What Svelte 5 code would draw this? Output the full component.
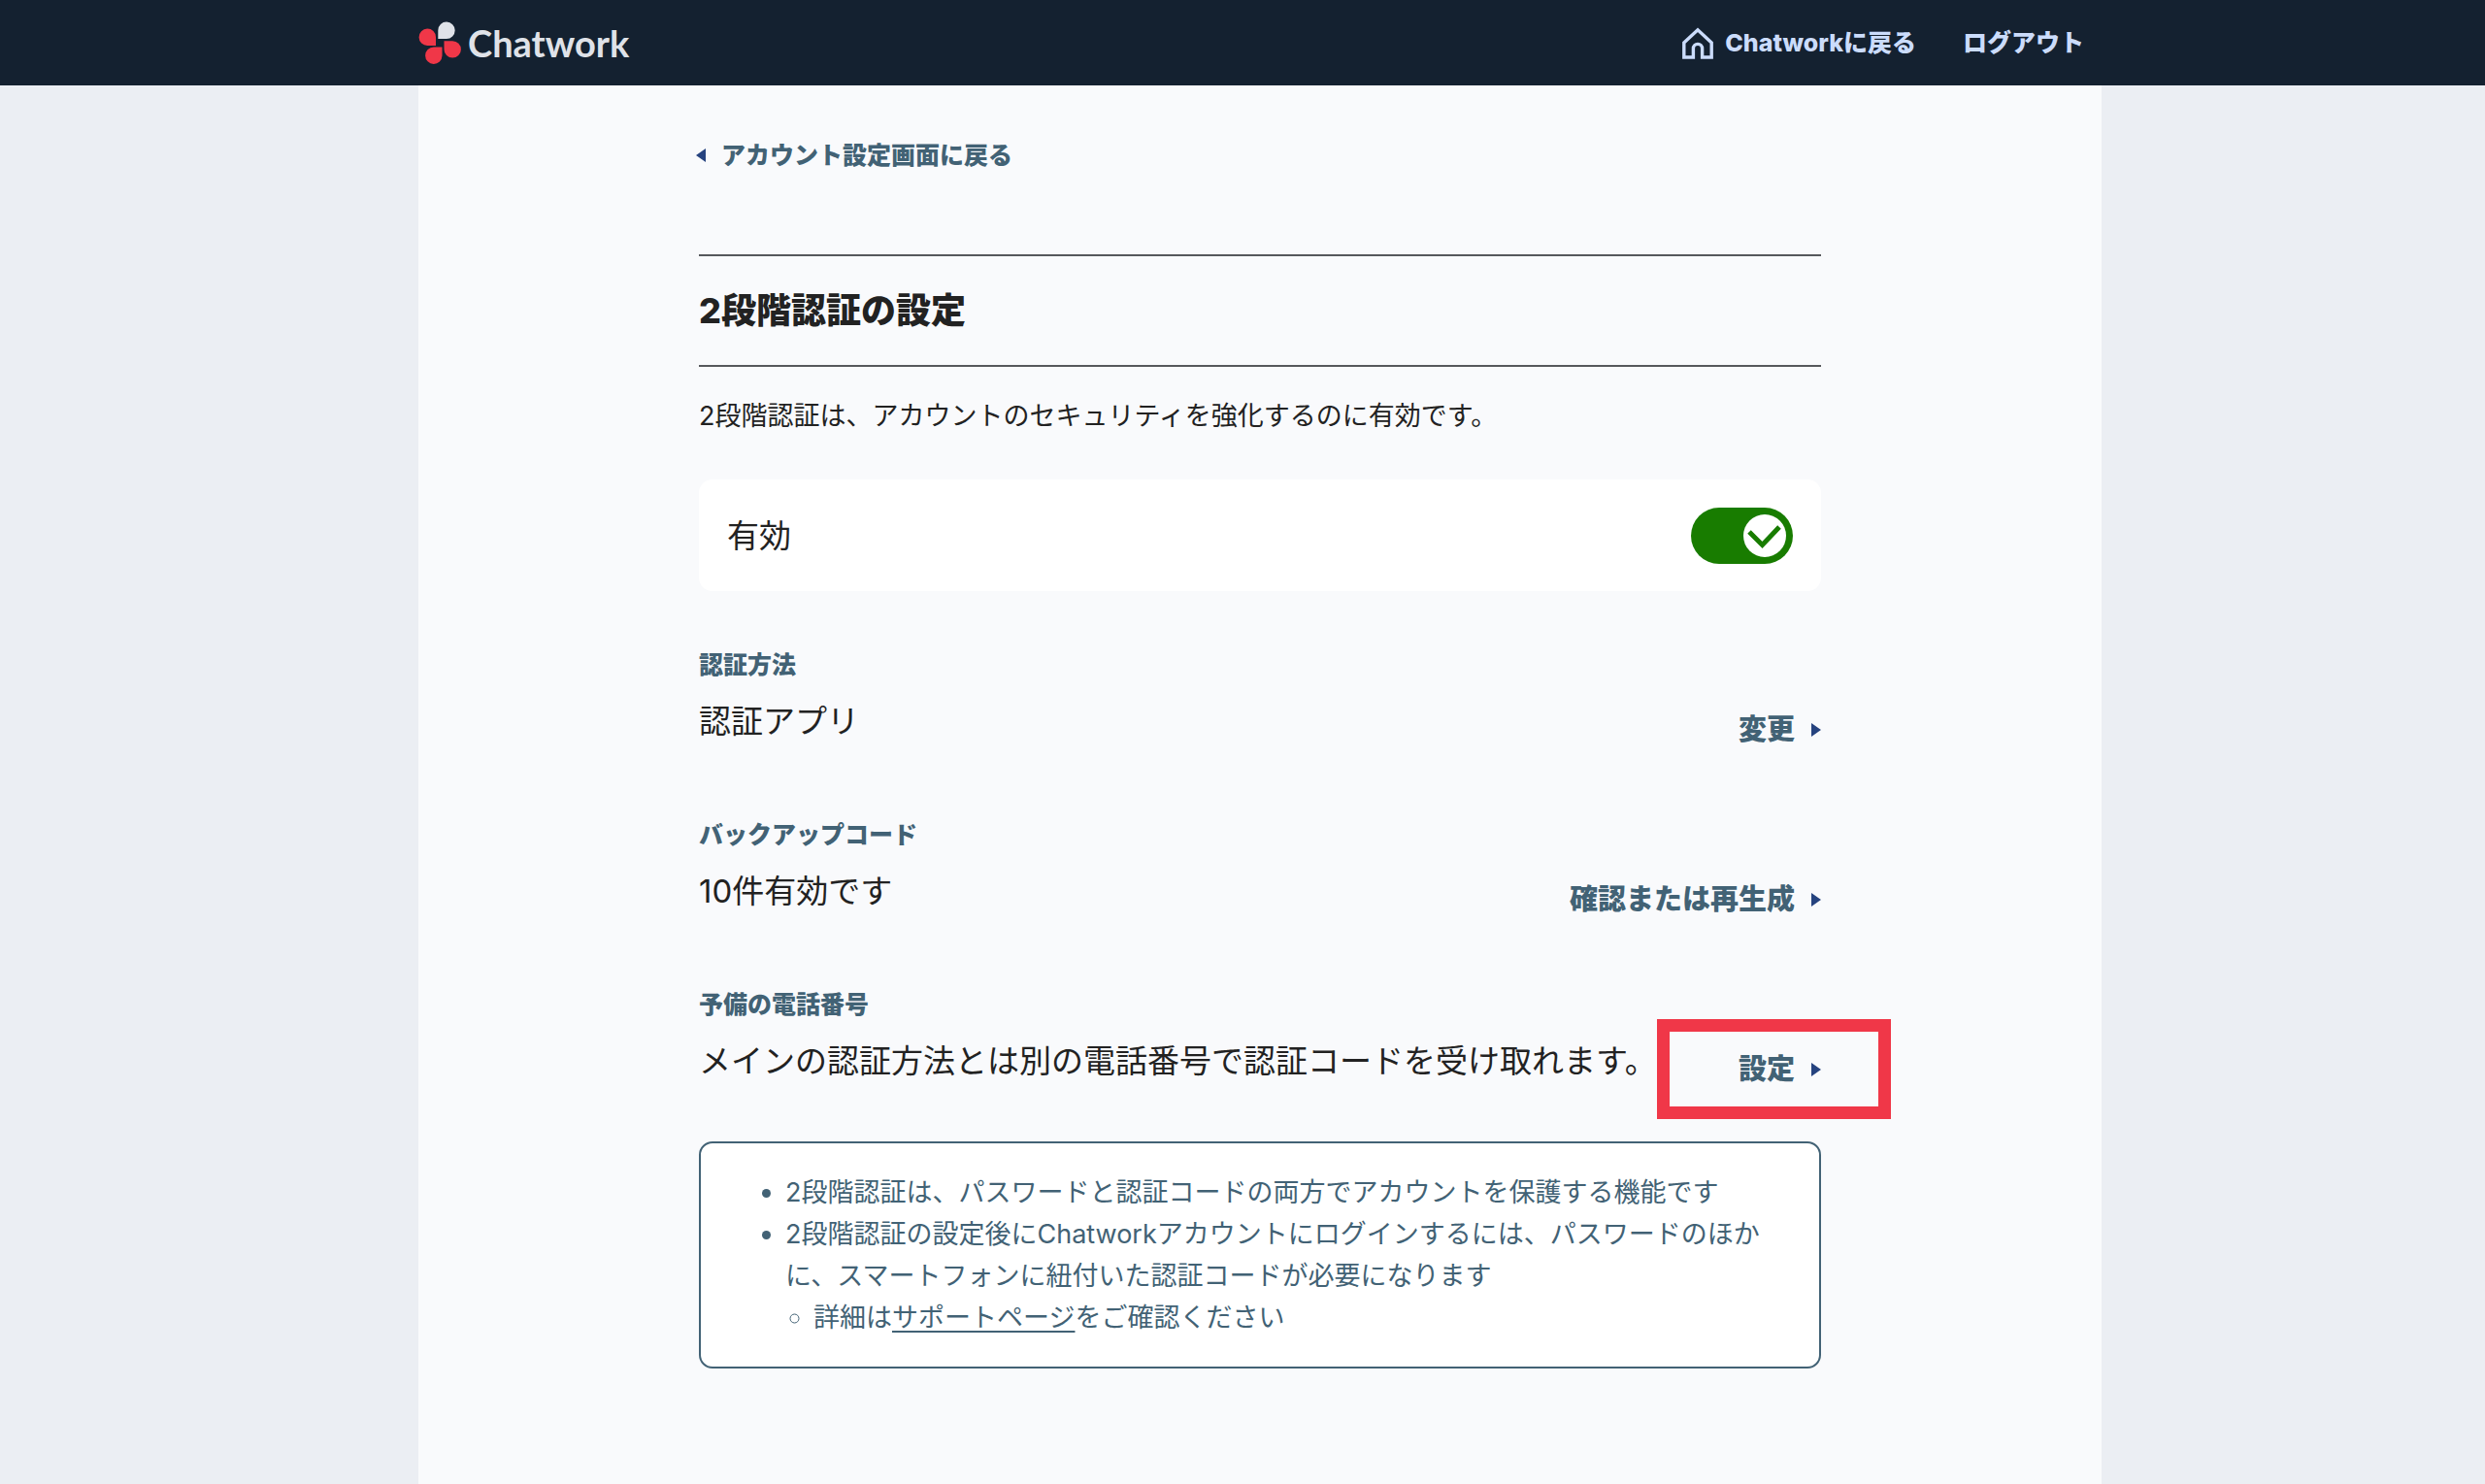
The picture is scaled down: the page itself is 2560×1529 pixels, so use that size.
<script>
  let enabled = true;

  const settings = [
    { label: '認証方法', value: '認証アプリ', action: '変更', highlight: false },
    { label: 'バックアップコード', value: '10件有効です', action: '確認または再生成', highlight: false },
    {
      label: '予備の電話番号',
      value: 'メインの認証方法とは別の電話番号で認証コードを受け取れます。',
      action: '設定',
      highlight: true,
    },
  ];
</script>

<div class="page">
  <header class="header">
    <div class="header-inner">
      <a class="logo" href="#top">
        <svg class="logo-mark" viewBox="0 0 44 44" aria-hidden="true">
          <path fill="#dfe2e8" d="M20.3 18V9.2a8.7 8.7 0 1 1 8.7 8.8z" />
          <path fill="#f03748" d="M18 25H9.4A8.7 8.7 0 1 1 18 16.2z" />
          <path fill="#f03748" d="M24.5 26.5v8.8a8.7 8.7 0 1 1-8.7-8.8z" />
          <path fill="#f03748" d="M26.5 20.2h8.7a8.7 8.7 0 1 1-8.7 8.7z" />
        </svg>
        <span>Chatwork</span>
      </a>
      <nav class="nav">
        <a href="#home">
          <svg class="home" viewBox="0 0 32 33" aria-hidden="true">
            <path d="M1.8 31V16L16 2.8 30.2 16v15H20.6v-9a4.6 4.6 0 0 0-9.2 0v9z" />
          </svg>
          <span>Chatworkに戻る</span>
        </a>
        <a href="#logout">ログアウト</a>
      </nav>
    </div>
  </header>

  <main class="main">
    <div class="content">
      <a class="back" href="#account">
        <svg class="arrow" viewBox="0 0 10 14" aria-hidden="true"><path d="M10 0v14L0 7z" /></svg>
        <span>アカウント設定画面に戻る</span>
      </a>

      <h1>2段階認証の設定</h1>
      <p class="lead">2段階認証は、アカウントのセキュリティを強化するのに有効です。</p>

      <label class="card">
        <span>有効</span>
        <span class="toggle">
          <input type="checkbox" role="switch" bind:checked={enabled} />
          <span class="knob">
            <svg viewBox="0 0 44 44" aria-hidden="true"><path d="M6 18l13.500 13.500L37 13" /></svg>
          </span>
        </span>
      </label>

      <div class="settings">
        {#each settings as item}
          <section class="item">
            <div>
              <h2>{item.label}</h2>
              <p>{item.value}</p>
            </div>
            <a class="action" class:highlight={item.highlight} href="#edit">
              <span>{item.action}</span>
              <svg class="arrow" viewBox="0 0 10 14" aria-hidden="true"><path d="M0 0v14l10-7z" /></svg>
            </a>
          </section>
        {/each}
      </div>

      <div class="notes">
        <ul>
          <li>2段階認証は、パスワードと認証コードの両方でアカウントを保護する機能です</li>
          <li>
            2段階認証の設定後にChatworkアカウントにログインするには、パスワードのほかに、スマートフォンに紐付いた認証コードが必要になります
            <ul>
              <li>詳細は<a href="#support">サポートページ</a>をご確認ください</li>
            </ul>
          </li>
        </ul>
      </div>
    </div>
  </main>
</div>

<style>
  :global(body) {
    background-color: #ebeef3;
  }

  * {
    box-sizing: border-box;
    margin: 0;
    padding: 0;
  }

  .page {
    display: flex;
    flex-direction: column;
    min-height: 100vh;
    font-family: Inter, 'Noto Sans CJK JP', sans-serif;
    color: #222;
  }

  a {
    color: inherit;
    text-decoration: none;
  }

  .header {
    background-color: #142130;
    padding-left: 36px;
  }

  .header-inner {
    display: flex;
    align-items: center;
    justify-content: space-between;
    max-width: 1734px;
    height: 88px;
    margin: 0 auto;
    padding-right: 18px;
  }

  .logo {
    display: flex;
    align-items: center;
    gap: 7px;
    color: #dfe2e8;
    font-family: Lato, sans-serif;
    font-size: 38px;
    line-height: 42px;
    font-weight: 700;
  }

  .logo-mark {
    width: 44px;
    height: 44px;
  }

  .nav {
    display: flex;
    gap: 48px;
    color: #cbdcfb;
    font-size: 25px;
    line-height: 36px;
    font-weight: 800;
  }

  .nav a {
    display: flex;
    align-items: center;
    gap: 12px;
  }

  .home {
    width: 32px;
    height: 33px;
    fill: none;
    stroke: currentColor;
    stroke-width: 3.4;
  }

  .main {
    flex: 1;
    display: flex;
    padding-left: 36px;
  }

  .content {
    width: 100%;
    max-width: 1734px;
    margin: 0 auto;
    padding: 54px 289px 120px;
    background-color: #f9fafc;
  }

  .arrow {
    flex: none;
    width: 10px;
    height: 14px;
    fill: #26437f;
  }

  .back {
    display: inline-flex;
    align-items: center;
    gap: 16px;
    margin-left: -3px;
    line-height: 36px;
    font-size: 25px;
    font-weight: 800;
    color: #426275;
    vertical-align: top;
  }

  h1 {
    margin-top: 84px;
    padding: 28px 0;
    border-top: 2px solid #56585c;
    border-bottom: 2px solid #56585c;
    font-size: 36px;
    line-height: 56px;
    font-weight: 800;
  }

  .lead {
    margin-top: 29px;
    font-size: 27px;
    line-height: 43px;
  }

  .card {
    display: flex;
    align-items: center;
    justify-content: space-between;
    height: 115px;
    margin-top: 44px;
    padding: 0 29px;
    border-radius: 14px;
    background-color: #fff;
    font-size: 33px;
    line-height: 48px;
  }

  .toggle {
    position: relative;
    display: flex;
    width: 105px;
    height: 58px;
  }

  .toggle input {
    appearance: none;
    width: 100%;
    height: 100%;
    border-radius: 29px;
    background-color: #8a949e;
    cursor: pointer;
  }

  .toggle input:checked {
    background-color: #187c00;
  }

  .knob {
    position: absolute;
    top: 7px;
    left: 7px;
    width: 44px;
    height: 44px;
    border-radius: 50%;
    background-color: #fff;
    pointer-events: none;
  }

  .toggle input:checked + .knob {
    left: auto;
    right: 7px;
  }

  .knob svg {
    display: block;
    fill: none;
    stroke: #187c00;
    stroke-width: 5;
  }

  .settings {
    display: grid;
    gap: 67px;
    margin-top: 58px;
  }

  .item {
    display: flex;
    justify-content: space-between;
    height: 108px;
  }

  h2 {
    margin-bottom: 16px;
    font-size: 25px;
    line-height: 36px;
    font-weight: 800;
    color: #426275;
  }

  .item p {
    font-size: 33px;
    line-height: 48px;
  }

  .action {
    position: relative;
    display: flex;
    align-items: center;
    align-self: flex-end;
    gap: 17px;
    font-size: 29px;
    line-height: 46px;
    font-weight: 800;
    color: #426275;
  }

  .highlight::after {
    content: '';
    position: absolute;
    inset: -29px -72px -28px -84px;
    border: 13px solid #f03748;
  }

  .notes {
    margin-top: 51px;
    padding: 29px 58px 29px 87px;
    border: 2px solid #426275;
    border-radius: 14px;
    background-color: #fff;
    font-size: 27px;
    line-height: 43px;
    color: #426275;
  }

  .notes ul ul {
    padding-left: 29px;
  }

  .notes li a {
    text-decoration: underline;
    text-decoration-thickness: 2px;
    text-decoration-skip-ink: none;
    text-underline-offset: 4px;
  }
</style>
